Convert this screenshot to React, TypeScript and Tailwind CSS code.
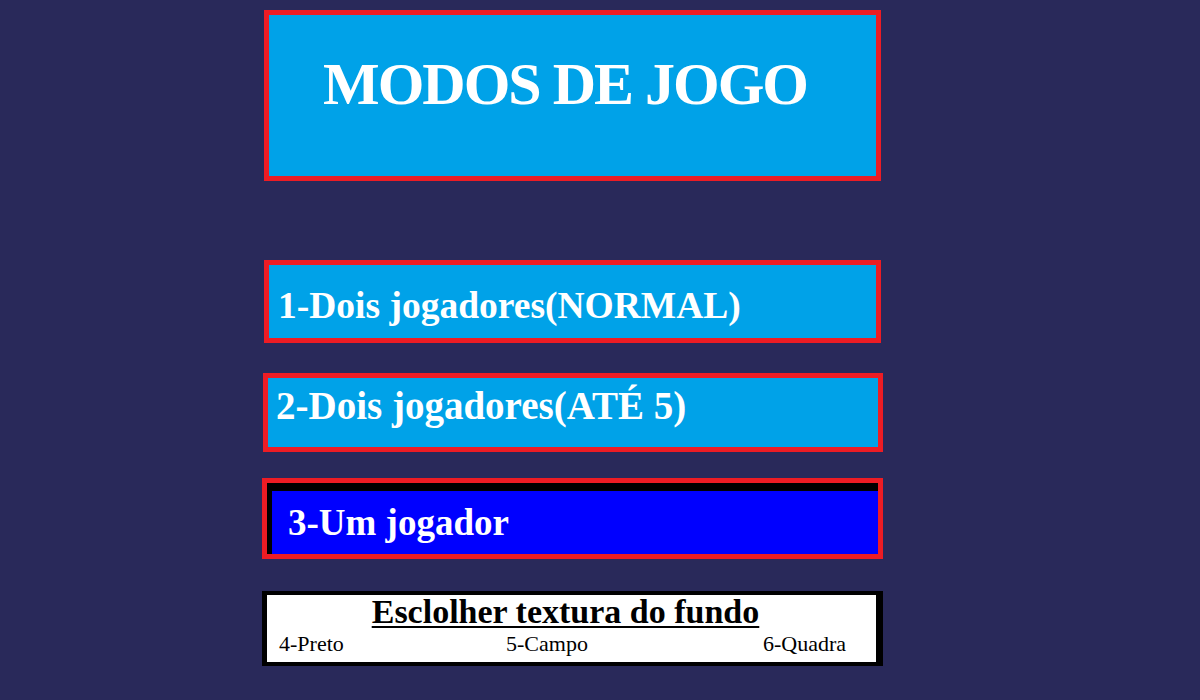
const SERIF = "font-['Liberation_Serif','Times_New_Roman',serif]";

/* Menu option with the red frame (Paint-like colours) */
function ModeButton({ label, className, textClass }: { label: string; className: string; textClass: string }) {
    return (
        <div className={`border-[5px] border-[#ed1c24] bg-[#00a2e8] ${className}`}>
            <span className={`block leading-none font-bold text-white ${textClass}`}>{label}</span>
        </div>
    );
}

export default function App() {
    return (
        <div className={`min-h-screen w-full bg-[#29295a] ${SERIF}`}>
            <div className="flex flex-col pt-[10px] pl-[262px]">
                {/* Title */}
                <div className="ml-[2px] h-[171px] w-[617px] border-[5px] border-[#ed1c24] bg-[#00a2e8] pt-[39px] pl-[54px]">
                    <h1 className="text-[60px] leading-none font-bold tracking-[-2px] text-white">MODOS DE JOGO</h1>
                </div>

                {/* Game modes */}
                <ModeButton
                    label="1-Dois jogadores(NORMAL)"
                    className="mt-[79px] ml-[2px] h-[83px] w-[617px] pt-[22px] pl-[9px]"
                    textClass="text-[37.5px]"
                />
                <ModeButton
                    label="2-Dois jogadores(ATÉ 5)"
                    className="mt-[30px] ml-[1px] h-[79px] w-[620px] pt-[8px] pl-[8px]"
                    textClass="text-[39px]"
                />

                {/* Selected option: pressed look with dark inset on top/left */}
                <div className="mt-[26px] h-[81px] w-[621px] border-[5px] border-[#ed1c24]">
                    <div className="h-full border-t-[8px] border-l-[5px] border-black bg-[#0000ff] pt-[13px] pl-[16px]">
                        <span className="block text-[37px] leading-none font-bold text-white">3-Um jogador</span>
                    </div>
                </div>

                {/* Background texture */}
                <div className="mt-[32px] h-[75px] w-[621px] border-t-[4px] border-r-[7px] border-b-[4px] border-l-[5px] border-black bg-white">
                    <div className="pr-[12px] text-center">
                        <span className="text-[34px] leading-none font-bold text-black underline decoration-[2px] underline-offset-[3px]">
                            Esclolher textura do fundo
                        </span>
                    </div>
                    <div className="mt-[3px] flex pl-[12px] text-[22px] leading-none text-black">
                        <span className="w-[227px]">4-Preto</span>
                        <span className="w-[257px]">5-Campo</span>
                        <span>6-Quadra</span>
                    </div>
                </div>
            </div>
        </div>
    );
}
